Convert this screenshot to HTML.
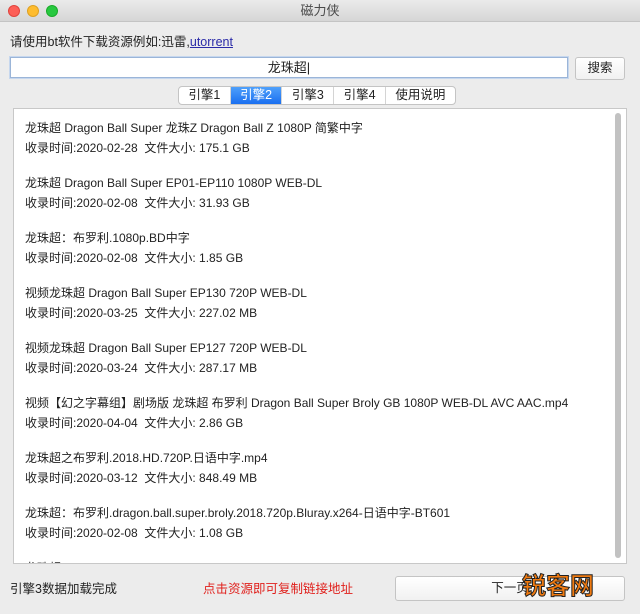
<!DOCTYPE html>
<html><head><meta charset="utf-8"><style>
*{margin:0;padding:0;box-sizing:border-box}
body{width:640px;height:614px;background:#ececec;font-family:"Liberation Sans","Noto Sans CJK SC",sans-serif;font-size:12px;color:#222;position:relative;overflow:hidden}
.tb{position:absolute;left:0;top:0;width:640px;height:22px;background:linear-gradient(#ebebeb,#d6d6d6);border-bottom:1px solid #c4c4c4;text-align:center;line-height:22px;font-size:13px;color:#4a4a4a}
.dot{position:absolute;top:5px;width:12px;height:12px;border-radius:50%}
.abs{position:absolute}
.inp{left:10px;top:57px;width:558px;height:21px;background:#fff;border:1px solid #9bb5d8;box-shadow:0 0 0 1px #c6d7ee;text-align:center;line-height:19px;font-size:13px}
.btn{background:linear-gradient(#fff,#f1f1f1);border:1px solid #c4c4c4;border-radius:3px;text-align:center}
.tabs{left:178px;top:86px;height:19px;display:flex;border:1px solid #c4c4c4;border-radius:4px;background:#fff;overflow:hidden}
.tabs div{padding:0 9.4px;line-height:17px;font-size:12.5px;border-left:1px solid #d4d4d4}
.tabs div:first-child{border-left:none}
.tabs .on{background:linear-gradient(#4fa0fb,#1a6ff0);color:#fff}
.panel{left:13px;top:108px;width:614px;height:456px;background:#fff;border:1px solid #c8c8c8;overflow:hidden}
.sb{position:absolute;right:5px;top:4px;width:6px;height:445px;background:#c2c2c2;border-radius:3px}
.e{position:absolute;left:11px;font-size:12px;line-height:20px;white-space:nowrap}
</style></head><body>
<div class="tb">磁力侠
<div class="dot" style="left:8px;background:#fd5f57;border:1px solid #e0443e"></div>
<div class="dot" style="left:27px;background:#febc2e;border:1px solid #dea123"></div>
<div class="dot" style="left:46px;background:#28c840;border:1px solid #1aab29"></div>
</div>
<div class="abs" style="left:10px;top:31px;font-size:12.5px">请使用bt软件下载资源例如:迅雷,<span style="color:#2a2aa8;text-decoration:underline">utorrent</span></div>
<div class="abs inp">龙珠超|</div>
<div class="abs btn" style="left:575px;top:57px;width:50px;height:23px;line-height:21px;font-size:12.5px">搜索</div>
<div class="abs tabs"><div>引擎1</div><div class="on">引擎2</div><div>引擎3</div><div>引擎4</div><div>使用说明</div></div>
<div class="abs panel">
<div class="e" style="top:9px">龙珠超 Dragon Ball Super 龙珠Z Dragon Ball Z 1080P 简繁中字<br>收录时间:2020-02-28&nbsp;&nbsp;文件大小: 175.1 GB</div>
<div class="e" style="top:64px">龙珠超 Dragon Ball Super EP01-EP110 1080P WEB-DL<br>收录时间:2020-02-08&nbsp;&nbsp;文件大小: 31.93 GB</div>
<div class="e" style="top:119px">龙珠超：布罗利.1080p.BD中字<br>收录时间:2020-02-08&nbsp;&nbsp;文件大小: 1.85 GB</div>
<div class="e" style="top:174px">视频龙珠超 Dragon Ball Super EP130 720P WEB-DL<br>收录时间:2020-03-25&nbsp;&nbsp;文件大小: 227.02 MB</div>
<div class="e" style="top:229px">视频龙珠超 Dragon Ball Super EP127 720P WEB-DL<br>收录时间:2020-03-24&nbsp;&nbsp;文件大小: 287.17 MB</div>
<div class="e" style="top:284px">视频【幻之字幕组】剧场版 龙珠超 布罗利 Dragon Ball Super Broly GB 1080P WEB-DL AVC AAC.mp4<br>收录时间:2020-04-04&nbsp;&nbsp;文件大小: 2.86 GB</div>
<div class="e" style="top:339px">龙珠超之布罗利.2018.HD.720P.日语中字.mp4<br>收录时间:2020-03-12&nbsp;&nbsp;文件大小: 848.49 MB</div>
<div class="e" style="top:394px">龙珠超：布罗利.dragon.ball.super.broly.2018.720p.Bluray.x264-日语中字-BT601<br>收录时间:2020-02-08&nbsp;&nbsp;文件大小: 1.08 GB</div>
<div class="e" style="top:449px">龙珠超 Dragon Ball Super EP01-EP131 1080P WEB-DL</div>
<div class="sb"></div>
</div>
<div class="abs" style="left:10px;top:578px;font-size:12.5px">引擎3数据加载完成</div>
<div class="abs" style="left:203px;top:578px;font-size:12.5px;color:#e0201c">点击资源即可复制链接地址</div>
<div class="abs btn" style="left:395px;top:576px;width:230px;height:25px;line-height:23px;font-size:12.5px">下一页</div>
<div class="abs" style="left:522px;top:566px;font-size:24px;font-weight:bold;color:#f07a10;-webkit-text-stroke:1px #222">锐客网</div>
</body></html>
